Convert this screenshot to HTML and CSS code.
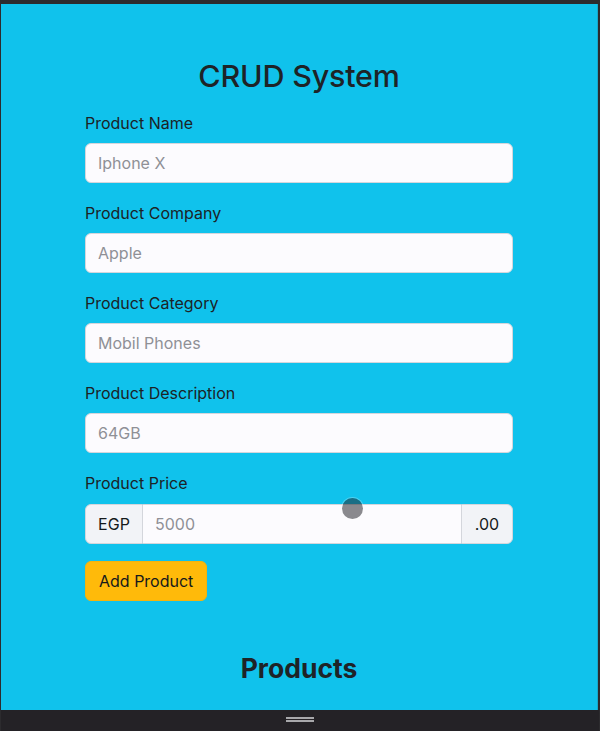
FILE: index.html
```html
<!DOCTYPE html>
<html lang="en">
<head>
<meta charset="utf-8">
<title>CRUD System</title>
<link rel="stylesheet" href="styles.css">
</head>
<body>
<div class="frame">
  <div class="viewport">
    <div class="container">
      <h1 class="title">CRUD System</h1>
      <div class="field">
        <label class="label" for="pname">Product Name</label>
        <input class="control" id="pname" type="text" placeholder="Iphone X">
      </div>
      <div class="field">
        <label class="label" for="pcompany">Product Company</label>
        <input class="control" id="pcompany" type="text" placeholder="Apple">
      </div>
      <div class="field">
        <label class="label" for="pcat">Product Category</label>
        <input class="control" id="pcat" type="text" placeholder="Mobil Phones">
      </div>
      <div class="field">
        <label class="label" for="pdesc">Product Description</label>
        <input class="control" id="pdesc" type="text" placeholder="64GB">
      </div>
      <div class="field field-last">
        <label class="label label-price" for="pprice">Product Price</label>
        <div class="group">
          <span class="addon addon-left">EGP</span>
          <input class="control group-control" id="pprice" type="text" placeholder="5000">
          <span class="addon addon-right">.00</span>
          <span class="cursor"></span>
        </div>
      </div>
      <button class="btn" type="button">Add Product</button>
      <h2 class="subtitle">Products</h2>
    </div>
  </div>
  <div class="bottombar">
    <span class="handle"></span>
  </div>
</div>
</body>
</html>
```

FILE: styles.css
```css
* { box-sizing: border-box; }

html, body {
  margin: 0;
  padding: 0;
  height: 100%;
}

body {
  background: #2c2b2e;
  font-family: Inter, "Liberation Sans", Arial, sans-serif;
  color: #212529;
  overflow: hidden;
}

.frame {
  width: 600px;
  height: 731px;
  display: flex;
  flex-direction: column;
  padding: 4px 2px 0 1px;
  background: #2c2b2e;
}

.viewport {
  flex: 1;
  background: #10c2ec;
  overflow: hidden;
  border-right: 1px solid #15a9cc;
}

.container {
  width: 428px;
  margin: 0 auto;
  padding-top: 53px;
}

.title {
  margin: 0 0 16px;
  text-align: center;
  font-size: 30.5px;
  line-height: 38px;
  font-weight: 500;
  color: #1e2327;
  letter-spacing: -0.2px;
}

.field {
  display: flex;
  flex-direction: column;
  margin-bottom: 18px;
}

.field-last {
  margin-bottom: 17px;
}

.label {
  font-size: 16px;
  line-height: 24px;
  margin-bottom: 8px;
  color: #1c2226;
}

.label-price {
  margin-bottom: 9px;
}

.control {
  height: 40px;
  width: 100%;
  padding: 0 12px;
  font-family: inherit;
  font-size: 16px;
  color: #212529;
  background: #fcfbfe;
  border: 1px solid #d4d6dc;
  border-radius: 6px;
  outline: none;
}

.control::placeholder {
  color: #8f9096;
  opacity: 1;
}

.group {
  position: relative;
  display: flex;
  height: 40px;
}

.addon {
  display: flex;
  align-items: center;
  justify-content: center;
  height: 40px;
  padding: 0 12px;
  font-size: 16px;
  color: #15191c;
  background: #f2f3f7;
  border: 1px solid #d4d6dc;
}

.addon-left {
  width: 58px;
  border-radius: 6px 0 0 6px;
  border-right: 1px solid #d4d6dc;
}

.addon-right {
  width: 52px;
  border-radius: 0 6px 6px 0;
}

.group-control {
  flex: 1;
  width: auto;
  border-radius: 0;
  border-left: none;
  border-right: none;
}

.cursor {
  position: absolute;
  left: 257px;
  top: -6px;
  width: 21px;
  height: 21px;
  border-radius: 50%;
  background: rgba(35, 35, 42, 0.53);
  box-shadow: 0 0 0 1px rgba(255, 255, 255, 0.25);
}

.btn {
  display: block;
  height: 40px;
  padding: 0 13px;
  font-family: inherit;
  font-size: 16px;
  color: #15191c;
  background: #ffba0a;
  border: 1px solid #f5b40c;
  border-radius: 6px;
}

.subtitle {
  margin: 50px 0 0;
  text-align: center;
  font-size: 26.5px;
  line-height: 34px;
  font-weight: 700;
  color: #1e2327;
}

.bottombar {
  height: 21px;
  background: #242226;
  display: flex;
  justify-content: center;
  padding-top: 7px;
  margin-right: -1px;
}

.handle {
  width: 28px;
  height: 5px;
  border-top: 2px solid #a8a8ab;
  border-bottom: 2px solid #a8a8ab;
}
```
